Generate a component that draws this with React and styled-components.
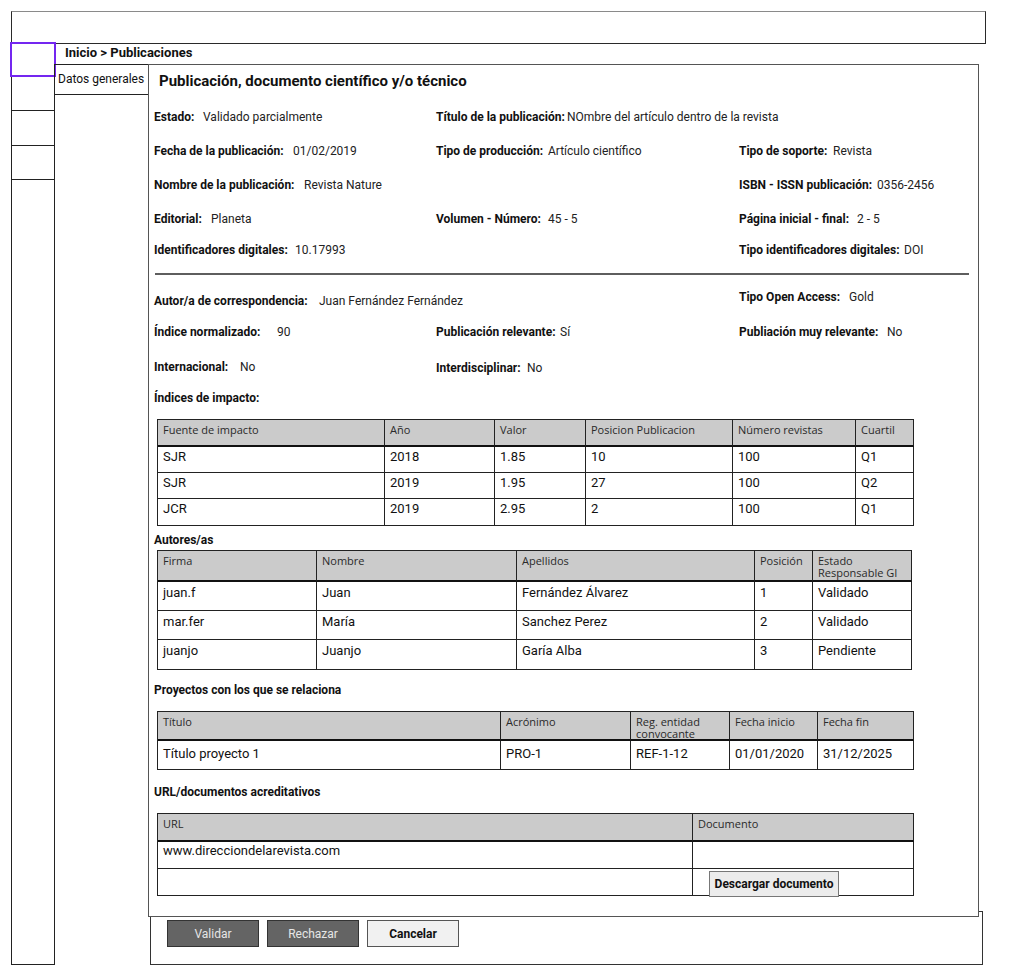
import React from 'react';
import styled, { createGlobalStyle } from 'styled-components';

const GlobalStyle = createGlobalStyle`
  html, body { margin: 0; padding: 0; background: #fff; }
  body { font-family: Roboto, "Liberation Sans", sans-serif; color: #111; }
  *, *::before, *::after { box-sizing: border-box; }
`;

const Page = styled.div`
  width: 1017px;
  padding: 11px 0 0 11px;
`;

const TopBar = styled.header`
  width: 975px;
  height: 33px;
  border: 1px solid #2a2a2a;
  border-top-color: #8a8a8a;
`;

const Body = styled.div`
  display: flex;
  align-items: flex-start;
  margin-top: -2px;
`;

const Sidebar = styled.nav`
  width: 44px;
  height: 923px;
  border: 1px solid #222;
  border-top: none;
  display: flex;
  flex-direction: column;
`;

const SideItem = styled.div`
  height: ${p => p.$h}px;
  border-bottom: 1px solid #222;
  ${p => p.$active && `
    margin: 0 -2px;
    border: 2px solid #7426f0;
  `}
`;

const Main = styled.div`
  display: flex;
  flex-direction: column;
  margin-left: -1px;
`;

const Breadcrumb = styled.div`
  height: 22px;
  line-height: 22px;
  padding-left: 11px;
  font-size: 13px;
  font-weight: 700;
  color: #111;
`;

const ContentRow = styled.div`
  display: flex;
  align-items: flex-start;
`;

const SubNav = styled.div`
  width: 94px;
  height: 31px;
  border: 1px solid #222;
  border-right: none;
  padding-left: 3px;
  font-size: 12px;
  line-height: 28px;
  color: #111;
  white-space: nowrap;
`;

const Panel = styled.section`
  position: relative;
  z-index: 1;
  background: #fff;
  width: 831px;
  height: 853px;
  border: 1px solid #555;
  padding-left: 5px;
`;

const Title = styled.h1`
  margin: 7px 0 0;
  height: 28px;
  padding-left: 5px;
  font-size: 15px;
  line-height: 18px;
  font-weight: 700;
  color: #111;
`;

const FieldRow = styled.div`
  display: grid;
  grid-template-columns: 282px 303px 1fr;
  align-items: center;
  height: ${p => p.$h}px;
`;

const Field = styled.div`
  display: flex;
  align-items: baseline;
  white-space: nowrap;
  font-size: 12px;
  line-height: 16px;
  margin-top: ${p => p.$dy || 0}px;
`;

const Label = styled.span`
  font-weight: 700;
  color: #111;
  min-width: ${p => p.$w}px;
`;

const Value = styled.span`
  color: #222;
`;

const Rule = styled.hr`
  margin: 9px 0 0 1px;
  width: 814px;
  height: 2px;
  border: none;
  background: #5e5e5e;
`;

const SectionLabel = styled.div`
  margin-top: ${p => p.$mt}px;
  font-size: 12px;
  line-height: 16px;
  font-weight: 700;
  color: #111;
`;

const Grid = styled.div`
  display: grid;
  width: ${p => p.$w}px;
  grid-template-columns: ${p => p.$cols};
  grid-template-rows: ${p => p.$rows};
  margin: ${p => p.$mt || 0}px 0 0 3px;
  border-top: 1px solid #222;
  border-left: 1px solid #222;
`;

const HeadCell = styled.div`
  background: #cbcbcb;
  border-right: 1px solid #222;
  border-bottom: 2px solid #111;
  padding: 4px 5px 0;
  font-family: "Open Sans", "Liberation Sans", sans-serif;
  font-size: 11px;
  line-height: 12px;
  color: #2a2a2a;
  overflow: hidden;
`;

const Cell = styled.div`
  border-right: 1px solid #222;
  border-bottom: 1px solid #222;
  padding: ${p => p.$pt}px 5px 0;
  font-size: 13px;
  line-height: 16px;
  color: #111;
  white-space: nowrap;
`;

const ButtonCell = styled.div`
  border-right: 1px solid #222;
  border-bottom: 1px solid #222;
  padding: 2px 0 0 16px;
`;

const DownloadButton = styled.button`
  width: 130px;
  height: 26px;
  margin: 0;
  padding: 0;
  background: #ececec;
  border: 1px solid #777;
  border-radius: 0;
  font-family: Roboto, "Liberation Sans", sans-serif;
  font-size: 12px;
  font-weight: 700;
  color: #111;
`;

const ActionBar = styled.div`
  width: 833px;
  height: 54px;
  margin: -6px 0 0 96px;
  border: 1px solid #333;
  padding: 8px 0 0 16px;
  display: flex;
  gap: 8px;
  align-items: flex-start;
`;

const ActionButton = styled.button`
  width: ${p => p.$w}px;
  height: 27px;
  margin: 0;
  padding: 0;
  border-radius: 0;
  font-family: Roboto, "Liberation Sans", sans-serif;
  font-size: 12px;
  ${p => p.$primary ? `
    background: #646464;
    border: 1px solid #333;
    color: #e6e6e6;
    font-weight: 400;
  ` : `
    background: #f1f1f1;
    border: 1px solid #555;
    color: #111;
    font-weight: 700;
  `}
`;

const topRows = [
  { h: 34, cells: [['Estado:', 'Validado parcialmente', 49], ['Título de la publicación:', 'NOmbre del artículo dentro de la revista', 131], null] },
  { h: 34, cells: [['Fecha de la publicación:', '01/02/2019', 139], ['Tipo de producción:', 'Artículo científico', 112], ['Tipo de soporte:', 'Revista', 94]] },
  { h: 34, cells: [['Nombre de la publicación:', 'Revista Nature', 150], null, ['ISBN - ISSN publicación:', '0356-2456', 138]] },
  { h: 34, cells: [['Editorial:', 'Planeta', 57], ['Volumen - Número:', '45 - 5', 112], ['Página inicial - final:', '2 - 5', 118]] },
  { h: 28, cells: [['Identificadores digitales:', '10.17993', 141], null, ['Tipo identificadores digitales:', 'DOI', 165]] },
];

const bottomRows = [
  { h: 44, cells: [['Autor/a de correspondencia:', 'Juan Fernández Fernández', 165, 8], null, ['Tipo Open Access:', 'Gold', 110]] },
  { h: 26, cells: [['Índice normalizado:', '90', 123], ['Publicación relevante:', 'Sí', 124], ['Publiación muy relevante:', 'No', 148]] },
  { h: 44, cells: [['Internacional:', 'No', 86], ['Interdisciplinar:', 'No', 91, 2], null] },
  { h: 18, cells: [['Índices de impacto:', '', 0], null, null] },
];

const tables = {
  impact: {
    cols: [227, 110, 91, 147, 123, 58],
    rows: [27, 26, 26, 27],
    pt: 2,
    head: ['Fuente de impacto', 'Año', 'Valor', 'Posicion Publicacion', 'Número revistas', 'Cuartil'],
    data: [
      ['SJR', '2018', '1.85', '10', '100', 'Q1'],
      ['SJR', '2019', '1.95', '27', '100', 'Q2'],
      ['JCR', '2019', '2.95', '2', '100', 'Q1'],
    ],
  },
  authors: {
    cols: [159, 200, 238, 58, 99],
    rows: [31, 29, 29, 30],
    pt: 3,
    head: ['Firma', 'Nombre', 'Apellidos', 'Posición', 'Estado Responsable GI'],
    data: [
      ['juan.f', 'Juan', 'Fernández Álvarez', '1', 'Validado'],
      ['mar.fer', 'María', 'Sanchez Perez', '2', 'Validado'],
      ['juanjo', 'Juanjo', 'Garía Alba', '3', 'Pendiente'],
    ],
  },
  projects: {
    cols: [343, 130, 99, 88, 96],
    rows: [29, 29],
    pt: 5,
    head: ['Título', 'Acrónimo', 'Reg. entidad convocante', 'Fecha inicio', 'Fecha fin'],
    data: [['Título proyecto 1', 'PRO-1', 'REF-1-12', '01/01/2020', '31/12/2025']],
  },
  urls: {
    cols: [535, 221],
    rows: [28, 27, 27],
    pt: 1,
    head: ['URL', 'Documento'],
    data: [['www.direcciondelarevista.com', ''], ['', '__download__']],
  },
};

function Fields({ rows }) {
  return rows.map((row, i) => (
    <FieldRow key={i} $h={row.h}>
      {row.cells.map((c, j) =>
        c ? (
          <Field key={j} $dy={c[3]}>
            <Label $w={c[2]}>{c[0]}</Label>
            {c[1] && <Value>{c[1]}</Value>}
          </Field>
        ) : (
          <span key={j} />
        )
      )}
    </FieldRow>
  ));
}

function DataTable({ t, mt }) {
  const width = 1 + t.cols.reduce((a, b) => a + b, 0);
  return (
    <Grid
      $w={width}
      $mt={mt}
      $cols={t.cols.map(c => `${c}px`).join(' ')}
      $rows={t.rows.map(r => `${r}px`).join(' ')}
    >
      {t.head.map((h, i) => (
        <HeadCell key={`h${i}`}>{h}</HeadCell>
      ))}
      {t.data.map((row, r) =>
        row.map((v, c) =>
          v === '__download__' ? (
            <ButtonCell key={`${r}-${c}`}>
              <DownloadButton>Descargar documento</DownloadButton>
            </ButtonCell>
          ) : (
            <Cell key={`${r}-${c}`} $pt={t.pt}>{v}</Cell>
          )
        )
      )}
    </Grid>
  );
}

export default function App() {
  return (
    <>
      <GlobalStyle />
      <Page>
        <TopBar />
        <Body>
          <Sidebar>
            <SideItem $active $h={35} />
            <SideItem $h={34} />
            <SideItem $h={35} />
            <SideItem $h={34} />
          </Sidebar>
          <Main>
            <Breadcrumb>Inicio &gt; Publicaciones</Breadcrumb>
            <ContentRow>
              <SubNav>Datos generales</SubNav>
              <Panel>
                <Title>Publicación, documento científico y/o técnico</Title>
                <Fields rows={topRows} />
                <Rule />
                <Fields rows={bottomRows} />
                <DataTable t={tables.impact} mt={12} />
                <SectionLabel $mt={6}>Autores/as</SectionLabel>
                <DataTable t={tables.authors} mt={2} />
                <SectionLabel $mt={12}>Proyectos con los que se relaciona</SectionLabel>
                <DataTable t={tables.projects} mt={13} />
                <SectionLabel $mt={14}>URL/documentos acreditativos</SectionLabel>
                <DataTable t={tables.urls} mt={13} />
              </Panel>
            </ContentRow>
            <ActionBar>
              <ActionButton $primary $w={92}>Validar</ActionButton>
              <ActionButton $primary $w={92}>Rechazar</ActionButton>
              <ActionButton $w={92}>Cancelar</ActionButton>
            </ActionBar>
          </Main>
        </Body>
      </Page>
    </>
  );
}
